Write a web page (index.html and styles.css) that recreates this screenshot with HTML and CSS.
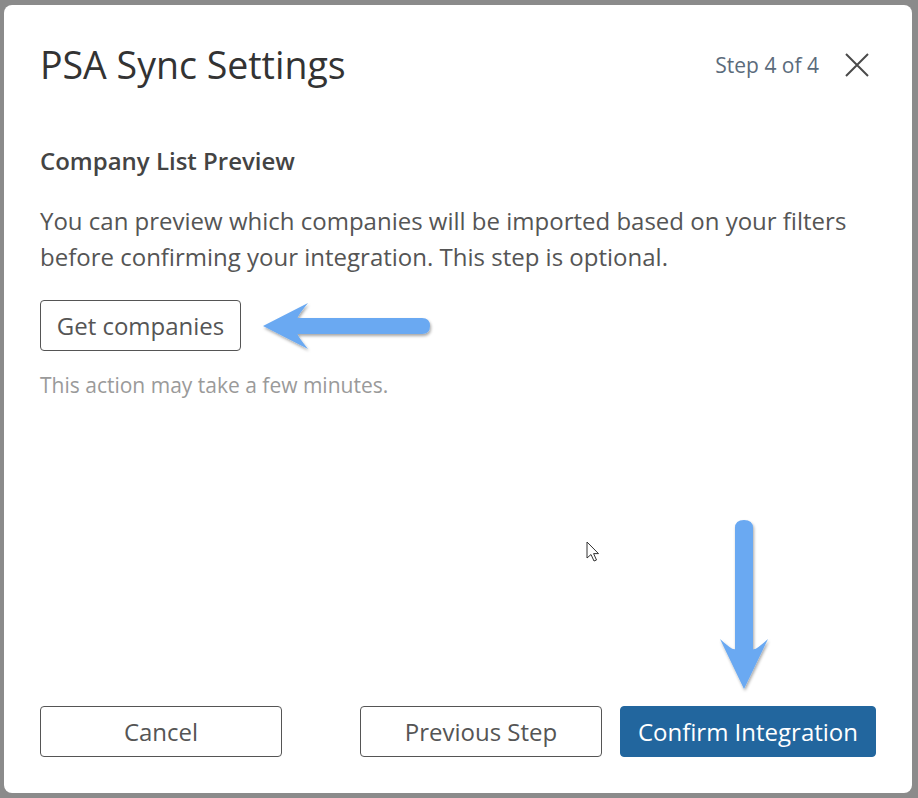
FILE: index.html
```html
<!DOCTYPE html>
<html lang="en">
<head>
<meta charset="utf-8">
<title>PSA Sync Settings</title>
<link rel="stylesheet" href="styles.css">
</head>
<body>
<div class="modal">
  <div class="modal-header">
    <h1 class="modal-title">PSA Sync Settings</h1>
    <div class="header-right">
      <span class="step">Step 4 of 4</span>
      <button class="close" aria-label="Close">
        <svg width="26" height="26" viewBox="0 0 26 26"><path d="M2 2 L24 24 M24 2 L2 24" stroke="#4a4a4a" stroke-width="2" fill="none"/></svg>
      </button>
    </div>
  </div>
  <div class="modal-body">
    <h2 class="section-title">Company List Preview</h2>
    <p class="desc">You can preview which companies will be imported based on your filters before confirming your integration. This step is optional.</p>
    <button class="btn btn-outline btn-get">Get companies</button>
    <p class="hint">This action may take a few minutes.</p>
  </div>
  <div class="modal-footer">
    <button class="btn btn-outline btn-wide">Cancel</button>
    <div class="footer-right">
      <button class="btn btn-outline btn-wide">Previous Step</button>
      <button class="btn btn-primary">Confirm Integration</button>
    </div>
  </div>
</div>

<svg class="annot arrow-left" width="190" height="70" viewBox="0 0 190 70">
  <defs>
    <filter id="sh" x="-20%" y="-30%" width="140%" height="160%">
      <feDropShadow dx="1" dy="2" stdDeviation="1.5" flood-color="#000" flood-opacity="0.35"/>
    </filter>
  </defs>
  <g filter="url(#sh)" fill="#6aa9f2">
    <path d="M5 35 L50 12 Q38 27 40 27 L164 27 Q172 27 172 35 Q172 43 164 43 L40 43 Q38 43 50 58 Z"/>
  </g>
</svg>

<svg class="annot arrow-down" width="70" height="190" viewBox="0 0 70 190">
  <defs>
    <filter id="sh2" x="-30%" y="-20%" width="160%" height="140%">
      <feDropShadow dx="1" dy="2" stdDeviation="1.5" flood-color="#000" flood-opacity="0.35"/>
    </filter>
  </defs>
  <g filter="url(#sh2)" fill="#6aa9f2">
    <path d="M35 177 L11 127 Q24 139 26 137 L26 16 Q26 8 35 8 Q44 8 44 16 L44 137 Q46 139 59 127 Z"/>
  </g>
</svg>

<svg class="annot cursor" width="16" height="24" viewBox="0 0 16 24">
  <path d="M1 1 L1 17 L5 13.5 L8 20 L10.5 19 L7.6 12.6 L12.5 12.6 Z" fill="#fff" stroke="#333" stroke-width="1"/>
</svg>
</body>
</html>
```
FILE: styles.css
```css
* { box-sizing: border-box; }
html, body { margin: 0; padding: 0; }
body {
  background: #8b8b8b;
  width: 918px;
  height: 798px;
  padding: 5px 6px 5px 4px;
  font-family: "Open Sans", "Noto Sans", sans-serif;
  position: relative;
  overflow: hidden;
}
.modal {
  background: #fff;
  height: 788px;
  border-radius: 8px;
  padding: 0 36px 36px;
  display: flex;
  flex-direction: column;
}
.modal-header {
  display: flex;
  align-items: center;
  justify-content: space-between;
  padding-top: 36px;
}
.modal-title {
  margin: 0;
  font-size: 37.5px;
  font-weight: 400;
  line-height: 48px;
  color: #333;
}
.header-right {
  display: flex;
  align-items: center;
  gap: 25px;
  margin-right: 6px;
}
.step {
  font-size: 21px;
  color: #5b6b7b;
}
.close {
  border: 0;
  background: none;
  padding: 0;
  width: 26px;
  height: 26px;
  display: flex;
}
.modal-body {
  flex: 1;
  padding-top: 56px;
}
.section-title {
  margin: 0;
  font-size: 24px;
  font-weight: 600;
  line-height: 32px;
  color: #444;
}
.desc {
  margin: 26px 0 0;
  font-size: 24px;
  line-height: 36px;
  color: #555;
}
.btn {
  font-family: "Open Sans", "Noto Sans", sans-serif;
  height: 51px;
  border-radius: 4px;
  font-size: 24px;
  cursor: pointer;
  padding: 0;
}
.btn-outline {
  background: #fff;
  border: 1.5px solid #555;
  color: #555;
}
.btn-get {
  margin-top: 25px;
  width: 201px;
}
.hint {
  margin: 20px 0 0;
  font-size: 21px;
  line-height: 28px;
  color: #9a9a9a;
}
.modal-footer {
  display: flex;
  justify-content: space-between;
  align-items: center;
}
.footer-right {
  display: flex;
  gap: 18px;
}
.btn-wide { width: 242px; }
.btn-primary {
  width: 256px;
  background: #22669e;
  border: 1px solid #22669e;
  color: #fff;
}
.annot { position: absolute; }
.arrow-left { left: 258px; top: 291px; }
.arrow-down { left: 709px; top: 512px; }
.cursor { left: 586px; top: 541px; }
```
